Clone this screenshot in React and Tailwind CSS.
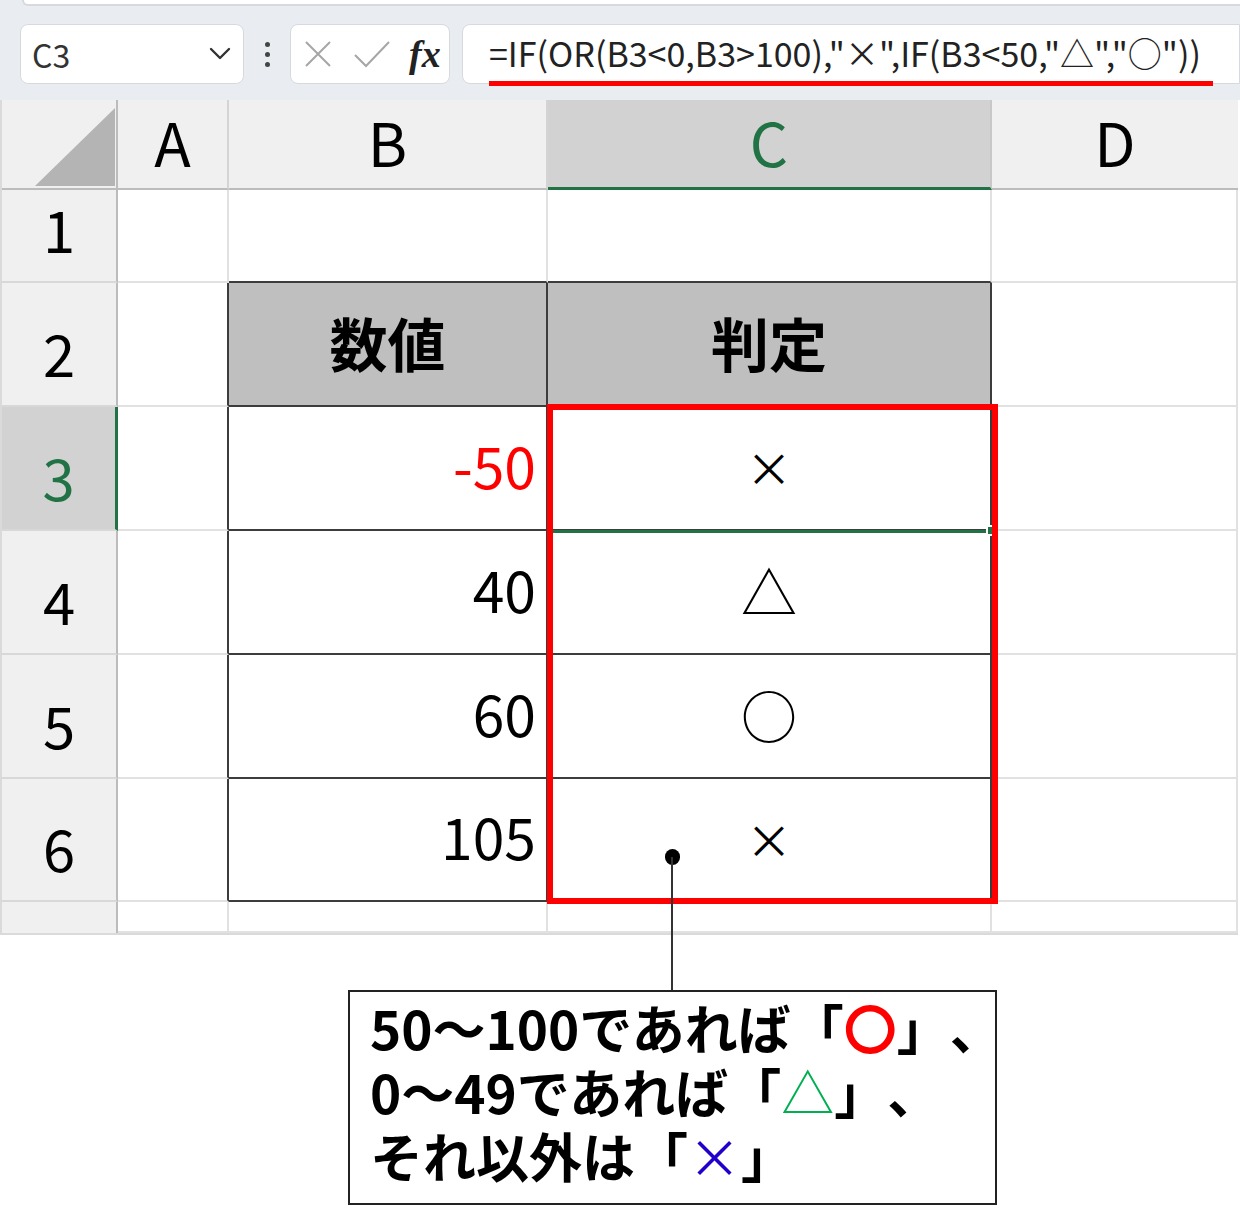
import React from 'react';

const font = { fontFamily: '"Noto Sans CJK JP", "Noto Sans", sans-serif' };

const light = 'border-[#e1e1e1]';

const ColHead = ({ label, selected, last }) => (
  <div
    className={`flex items-center justify-center text-[60px] leading-none ${
      selected
        ? 'bg-[#d2d2d2] text-[#217346] border-b-[3px] border-b-[#217346] border-r-2 border-r-[#c8c8c8]'
        : `bg-[#f0f0f0] text-black border-b-2 border-b-[#bcbcbc] ${last ? '' : 'border-r-2 border-r-[#d4d4d4]'}`
    }`}
  >
    <span className="-mt-[6px]">{label}</span>
  </div>
);

const RowHead = ({ label, selected }) => (
  <div
    className={`flex items-end justify-center text-[58px] leading-none pb-[24px] border-b-2 border-b-[#d8d8d8] ${
      selected
        ? 'bg-[#d2d2d2] text-[#217346] border-r-[3px] border-r-[#217346]'
        : 'bg-[#f0f0f0] text-black border-r-2 border-r-[#bcbcbc]'
    }`}
  >
    {label}
  </div>
);

const Cell = ({ className = '', children }) => (
  <div className={`flex items-center border-r-2 border-b-2 ${className}`}>{children}</div>
);

const values = [
  { n: '-50', red: true, mark: '×', small: true },
  { n: '40', mark: '△' },
  { n: '60', mark: '○' },
  { n: '105', mark: '×', small: true },
];

export default function App() {
  return (
    <div
      className="relative w-[1240px] h-[1223px] bg-white overflow-hidden [text-spacing-trim:space-all]"
      style={font}
    >
      {/* formula bar */}
      <div className="h-[100px] bg-[#e9ecf0] relative">
        <div className="h-[6px] ml-[22px] bg-white border-b-2 border-l-2 border-[#d6d9dd] rounded-bl-[6px]" />
        <div className="flex items-center gap-0 pt-[18px]">
          <div className="ml-[20px] w-[224px] h-[60px] bg-white border border-[#d6dadf] rounded-[8px] flex items-center justify-between pl-[11px] pr-[12px]">
            <span className="text-[32px] text-[#333] leading-none">C3</span>
            <svg width="22" height="14" viewBox="0 0 22 14" fill="none">
              <path d="M2 2 L11 11 L20 2" stroke="#333" strokeWidth="2.4" strokeLinecap="round" strokeLinejoin="round" />
            </svg>
          </div>
          <div className="w-[46px] flex flex-col items-center gap-[5px]">
            <span className="w-[5px] h-[5px] rounded-full bg-[#444]" />
            <span className="w-[5px] h-[5px] rounded-full bg-[#444]" />
            <span className="w-[5px] h-[5px] rounded-full bg-[#444]" />
          </div>
          <div className="w-[160px] h-[60px] bg-white border border-[#d6dadf] rounded-[8px] flex items-center pl-[12px]">
            <svg width="30" height="30" viewBox="0 0 30 30">
              <path d="M3 3 L27 27 M27 3 L3 27" stroke="#a6a6a6" strokeWidth="2" />
            </svg>
            <svg className="ml-[20px]" width="38" height="30" viewBox="0 0 38 30">
              <path d="M2 16 L13 27 L36 3" stroke="#a6a6a6" strokeWidth="2" fill="none" />
            </svg>
            <span
              className="ml-[18px] text-[38px] italic font-bold leading-none text-[#222]"
              style={{ fontFamily: '"Liberation Serif", "DejaVu Serif", serif' }}
            >
              fx
            </span>
          </div>
          <div className="ml-[12px] flex-1 h-[60px] bg-white border border-[#d6dadf] rounded-l-[8px] flex items-center pl-[26px] relative">
            <span className="text-[34px] leading-none text-[#222] whitespace-nowrap -mt-[2px]">
              =IF(OR(B3&lt;0,B3&gt;100),"×",IF(B3&lt;50,"△","○"))
            </span>
            <div className="absolute left-[26px] top-[56px] w-[724px] h-[5px] bg-[#ff0000]" />
          </div>
        </div>
      </div>

      {/* sheet */}
      <div className="relative w-[1238px] border-l-2 border-b-2 border-[#dadada]">
        <div className="grid grid-cols-[116px_111px_319px_444px_246px] grid-rows-[90px_93px_124px_124px_124px_124px_123px_31px]">
          {/* header row */}
          <div className="bg-[#f0f0f0] border-r-2 border-b-2 border-[#bcbcbc] relative">
            <svg className="absolute left-[33px] top-[8px]" width="80" height="78" viewBox="0 0 80 78">
              <polygon points="80,0 80,78 0,78" fill="#b4b4b4" />
            </svg>
          </div>
          <ColHead label="A" />
          <ColHead label="B" />
          <ColHead label="C" selected />
          <ColHead label="D" last />

          {/* row 1 */}
          <RowHead label="1" />
          <Cell className={light} />
          <Cell className="border-r-[#e1e1e1] border-b-[#3c3c3c]" />
          <Cell className="border-r-[#e1e1e1] border-b-[#3c3c3c]" />
          <Cell className={light} />

          {/* row 2 */}
          <RowHead label="2" />
          <Cell className="border-r-[#3c3c3c] border-b-[#e1e1e1]" />
          <Cell className="bg-[#bfbfbf] border-[#3c3c3c] justify-center">
            <span className="text-[58px] font-bold leading-none text-black -mt-[4px]">数値</span>
          </Cell>
          <Cell className="bg-[#bfbfbf] border-[#3c3c3c] justify-center">
            <span className="text-[58px] font-bold leading-none text-black -mt-[4px]">判定</span>
          </Cell>
          <Cell className={light} />

          {values.map((v, i) => (
            <React.Fragment key={i}>
              <RowHead label={String(i + 3)} selected={i === 0} />
              <Cell className="border-r-[#3c3c3c] border-b-[#e1e1e1]" />
              <Cell className="border-[#3c3c3c] justify-end pr-[10px]">
                <span className={`text-[57px] leading-none -mt-[8px] ${v.red ? 'text-[#ff0000]' : 'text-black'}`}>{v.n}</span>
              </Cell>
              <Cell className="border-[#3c3c3c] justify-center">
                <span className={`leading-none text-black -mt-[4px] ${v.small ? 'text-[46px]' : 'text-[56px]'}`}>{v.mark}</span>
              </Cell>
              <Cell className={light} />
            </React.Fragment>
          ))}

          {/* row 7 partial */}
          <div className="bg-[#f0f0f0] border-r-2 border-r-[#bcbcbc]" />
          <Cell className={light} />
          <Cell className={light} />
          <Cell className={light} />
          <Cell className="border-[#e1e1e1] border-r-0" />
        </div>

        {/* active cell selection */}
        <div className="absolute left-[545px] top-[305px] w-[448px] h-[128px] border-[3px] border-[#217346]" />
        <div className="absolute left-[984px] top-[425px] w-[11px] h-[11px] bg-[#217346] border-2 border-white" />
        {/* red highlight frame */}
        <div className="absolute left-[545px] top-[304px] w-[451px] h-[500px] border-[6px] border-[#ff0000]" />
      </div>

      {/* callout pointer */}
      <div className="absolute left-[665px] top-[849px] w-[15px] h-[16px] rounded-full bg-black" />
      <div className="absolute left-[671px] top-[857px] w-[2px] h-[133px] bg-[#333]" />

      {/* callout box */}
      <div className="mt-[55px] ml-[348px] w-[649px] h-[215px] border-2 border-[#222] pl-[20px] pt-[3px]">
        <div className="text-[53px] font-bold leading-[64px] text-black whitespace-nowrap">
          <div>
            50～100であれば「<span className="text-[#ff0000]">〇</span>」、
          </div>
          <div>
            0～49であれば「<span className="text-[#00b050] font-normal">△</span>」、
          </div>
          <div>
            それ以外は「<span className="text-[#2200cc] font-normal">×</span>」
          </div>
        </div>
      </div>
    </div>
  );
}
